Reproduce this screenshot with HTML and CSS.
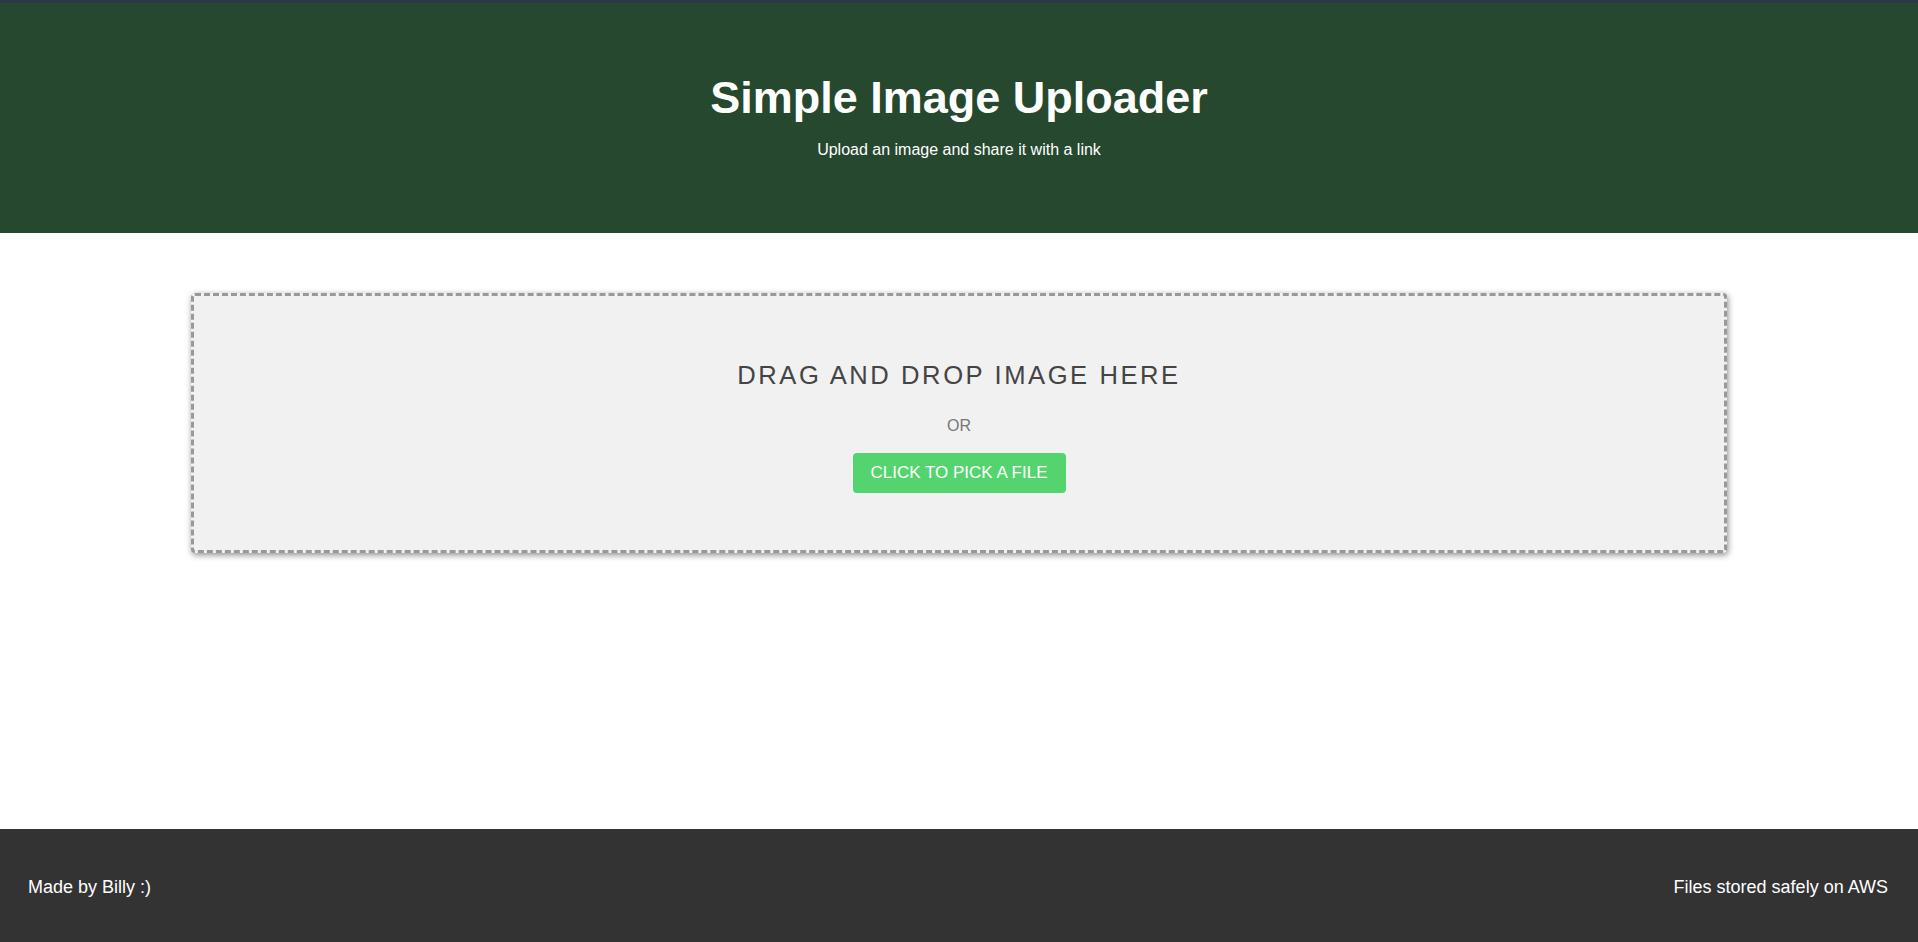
FILE: index.html
```html
<!DOCTYPE html>
<html lang="en">
<head>
<meta charset="utf-8">
<title>Simple Image Uploader</title>
<link rel="stylesheet" href="styles.css">
</head>
<body>
<div class="page">
  <div class="topbar"></div>
  <header class="hero">
    <h1 class="hero-title">Simple Image Uploader</h1>
    <p class="hero-sub">Upload an image and share it with a link</p>
  </header>
  <main class="main">
    <section class="dropzone">
      <p class="drop-title">DRAG AND DROP IMAGE HERE</p>
      <p class="drop-or">OR</p>
      <button class="pick-btn" type="button">CLICK TO PICK A FILE</button>
    </section>
  </main>
  <footer class="footer">
    <span class="footer-left">Made by Billy :)</span>
    <span class="footer-right">Files stored safely on AWS</span>
  </footer>
</div>
</body>
</html>
```

FILE: styles.css
```css
* { box-sizing: border-box; }
html, body { margin: 0; padding: 0; }
body {
  font-family: "Liberation Sans", Arial, sans-serif;
  background: #ffffff;
}
.page {
  min-height: 100vh;
  display: flex;
  flex-direction: column;
}
.topbar {
  height: 3px;
  background: #31354a;
}
.hero {
  background: #25482e;
  color: #ffffff;
  text-align: center;
  padding: 69px 0 74px;
}
.hero-title {
  margin: 0;
  font-size: 45px;
  line-height: 52px;
  font-weight: bold;
}
.hero-sub {
  margin: 17px 0 0;
  font-size: 16px;
  line-height: 18px;
}
.main {
  flex: 1;
  padding-top: 60px;
}
.dropzone {
  width: 1536px;
  margin: 0 auto;
  background: #f1f1f1;
  border: 3px dashed #999999;
  border-radius: 4px;
  box-shadow: 1px 2px 6px rgba(0, 0, 0, 0.45);
  padding: 64px 0 57px;
  display: flex;
  flex-direction: column;
  align-items: center;
}
.drop-title {
  margin: 0;
  font-size: 25.6px;
  line-height: 30px;
  letter-spacing: 2.56px;
  color: #444444;
}
.drop-or {
  margin: 27px 0 0;
  font-size: 16px;
  line-height: 18px;
  color: #777777;
}
.pick-btn {
  margin-top: 18px;
  height: 40px;
  padding: 0 18px;
  border: none;
  border-radius: 4px;
  background: #54d46f;
  color: #ffffff;
  font-family: "Liberation Sans", Arial, sans-serif;
  font-size: 17px;
  line-height: 20px;
}
.footer {
  height: 113px;
  background: #333333;
  color: #ffffff;
  font-size: 18px;
  display: flex;
  align-items: center;
  justify-content: space-between;
  padding: 4px 30px 0 28px;
}
```
